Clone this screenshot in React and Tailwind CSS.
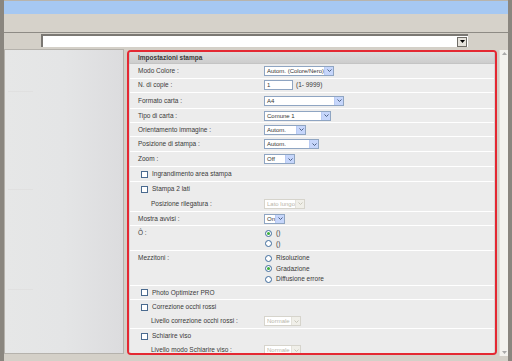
import React from "react"

//small xp-style controls
function Arrow({ disabled }) {
  return (
    <div
      className={
        "ml-auto flex h-full w-[9px] shrink-0 items-center justify-center border-l " +
        (disabled ? "border-[#e4e2da] bg-[#f0efe9]" : "border-[#b9cbf3] bg-[#c6d6fb]")
      }
    >
      <svg width="5" height="3" viewBox="0 0 5 3">
        <path d="M0.5 0.5 L2.5 2.5 L4.5 0.5" fill="none" stroke={disabled ? "#c9c7ba" : "#4d6185"} strokeWidth="1" />
      </svg>
    </div>
  )
}

function Select({ w, value, disabled }) {
  return (
    <div
      className={
        "flex h-[10px] items-center overflow-hidden border bg-white text-[6px] " +
        (disabled ? "border-[#d6d4cc] text-[#b8b6aa]" : "border-[#8fa5c2] text-[#333]")
      }
      style={{ width: w }}
    >
      <span className="whitespace-nowrap pl-[2px] leading-none">{value}</span>
      <Arrow disabled={disabled} />
    </div>
  )
}

function Check({ label }) {
  return (
    <div className="flex items-center pl-[11px]">
      <div className="h-[7px] w-[7px] border border-[#4a6a8f] bg-white" />
      <span className="pl-[4px]">{label}</span>
    </div>
  )
}

function Radio({ label, checked }) {
  return (
    <div className="flex h-[10.5px] items-center">
      <div className="flex h-[7px] w-[7px] items-center justify-center rounded-full border border-[#3d6a9c] bg-white">
        {checked && <div className="h-[3px] w-[3px] rounded-full bg-[#3cae3c]" />}
      </div>
      <span className="pl-[4px]">{label}</span>
    </div>
  )
}

function Row({ label, children, h = "h-[14.5px]", top }) {
  return (
    <div className={"flex border-b border-white " + h + (top ? " items-start pt-[2px]" : " items-center")}>
      <div className="w-[134px] shrink-0 pl-[8px]">{label}</div>
      <div className="flex items-center">{children}</div>
    </div>
  )
}

export default function App() {
  return (
    <div
      className="flex h-[361px] w-[512px] flex-col overflow-hidden border-x-4 border-[#8a867f] bg-[#d4d0c8] text-[6.5px] text-[#3a3a3a]"
      style={{ fontFamily: "'Liberation Sans', Arial, sans-serif" }}
    >
      {/* title strip */}
      <div className="h-[14px] shrink-0 border-t border-[#b8b4ac] bg-[#a6c8f2]" />
      <div className="h-[19px] shrink-0 border-b border-[#8e8b85] bg-[#d6d2ca]" />

      {/* address row */}
      <div className="flex h-[15px] shrink-0 items-center pl-[37px]">
        <div className="flex h-[13px] w-[427px] items-center border-l-2 border-t-2 border-[#7b7873] bg-white">
          <div className="ml-auto mr-[1px] flex h-[10px] w-[10px] items-center justify-center border border-[#6f6c66] bg-[#e6e3dc]">
            <svg width="5" height="3" viewBox="0 0 5 3">
              <path d="M0 0 H5 L2.5 3 Z" fill="#000" />
            </svg>
          </div>
        </div>
      </div>

      <div className="flex flex-1">
        {/* sidebar */}
        <div className="mt-[1px] h-[305px] w-[120px] shrink-0 border border-[#b5b2ac] bg-gradient-to-r from-[#e6e7e7] via-[#e4e5e6] to-[#dcdcde]">
          <div className="ml-[3px] mt-[41px] h-px w-[25px] bg-[#e0e0e0]" />
          <div className="ml-[3px] mt-[97px] h-px w-[25px] bg-[#e0e0e0]" />
          <div className="ml-[3px] mt-[99px] h-px w-[25px] bg-[#e0e0e0]" />
        </div>

        {/* settings panel */}
        <div className="ml-[3px] mt-[2px] h-[305px] w-[370px] shrink-0 overflow-hidden rounded-[4px] border-2 border-[#e42832] bg-[#ececec]">
          <div className="flex h-[12px] items-center border-x border-b border-[#c4c4c4] bg-gradient-to-b from-[#dcdcdc] to-[#cdcdcd] pl-[8px] font-bold text-[#3a3a3a]">
            Impostazioni stampa
          </div>
          <div className="border-x border-[#d8d8d8]">
            <Row label="Modo Colore :">
              <Select w={70} value="Autom. (Colore/Nero)" />
            </Row>
            <Row label="N. di copie :">
              <div className="flex h-[10px] w-[29px] items-center border border-[#8fa5c2] bg-white pl-[2px] text-[6px]">1</div>
              <span className="pl-[3px]">(1- 9999)</span>
            </Row>
            <Row label="Formato carta :" h="h-[16px]">
              <Select w={80} value="A4" />
            </Row>
            <Row label="Tipo di carta :" h="h-[14px]">
              <Select w={67} value="Comune 1" />
            </Row>
            <Row label="Orientamento immagine :" h="h-[14px]">
              <Select w={42} value="Autom." />
            </Row>
            <Row label="Posizione di stampa :" h="h-[15px]">
              <Select w={55} value="Autom." />
            </Row>
            <Row label="Zoom :" h="h-[15px]">
              <Select w={31} value="Off" />
            </Row>
            <div className="flex h-[15px] items-center border-b border-white">
              <Check label="Ingrandimento area stampa" />
            </div>
            <div className="border-b border-white">
              <div className="flex h-[14px] items-center">
                <Check label="Stampa 2 lati" />
              </div>
              <div className="flex h-[15px] items-center">
                <div className="w-[134px] shrink-0 pl-[21px]">Posizione rilegatura :</div>
                <Select w={41} value="Lato lungo" disabled />
              </div>
            </div>
            <Row label="Mostra avvisi :" h="h-[14px]">
              <Select w={21} value="On" />
            </Row>
            <Row label="Ô :" h="h-[25px]" top>
              <div className="flex flex-col pl-[1px]">
                <Radio label="()" checked />
                <Radio label="()" />
              </div>
            </Row>
            <Row label="Mezzitoni :" h="h-[35px]" top>
              <div className="flex flex-col pl-[1px]">
                <Radio label="Risoluzione" />
                <Radio label="Gradazione" checked />
                <Radio label="Diffusione errore" />
              </div>
            </Row>
            <div className="flex h-[14px] items-center border-b border-white">
              <Check label="Photo Optimizer PRO" />
            </div>
            <div className="border-b border-white">
              <div className="flex h-[14px] items-center">
                <Check label="Correzione occhi rossi" />
              </div>
              <div className="flex h-[14px] items-center">
                <div className="w-[134px] shrink-0 pl-[21px]">Livello correzione occhi rossi :</div>
                <Select w={37} value="Normale" disabled />
              </div>
            </div>
            <div>
              <div className="flex h-[14px] items-center">
                <Check label="Schiarire viso" />
              </div>
              <div className="flex h-[14px] items-center">
                <div className="w-[134px] shrink-0 pl-[21px]">Livello modo Schiarire viso :</div>
                <Select w={37} value="Normale" disabled />
              </div>
            </div>
          </div>
        </div>

        {/* scrollbar */}
        <div className="ml-[2px] mt-[2px] flex h-[306px] w-[9px] shrink-0 flex-col items-center justify-between border-l border-[#e0ded8] bg-[#f3f2ee] py-[2px]">
          <svg width="5" height="3" viewBox="0 0 5 3">
            <path d="M0 3 H5 L2.5 0 Z" fill="#a9a9a9" />
          </svg>
          <svg width="5" height="3" viewBox="0 0 5 3">
            <path d="M0 0 H5 L2.5 3 Z" fill="#a9a9a9" />
          </svg>
        </div>
      </div>
    </div>
  )
}
